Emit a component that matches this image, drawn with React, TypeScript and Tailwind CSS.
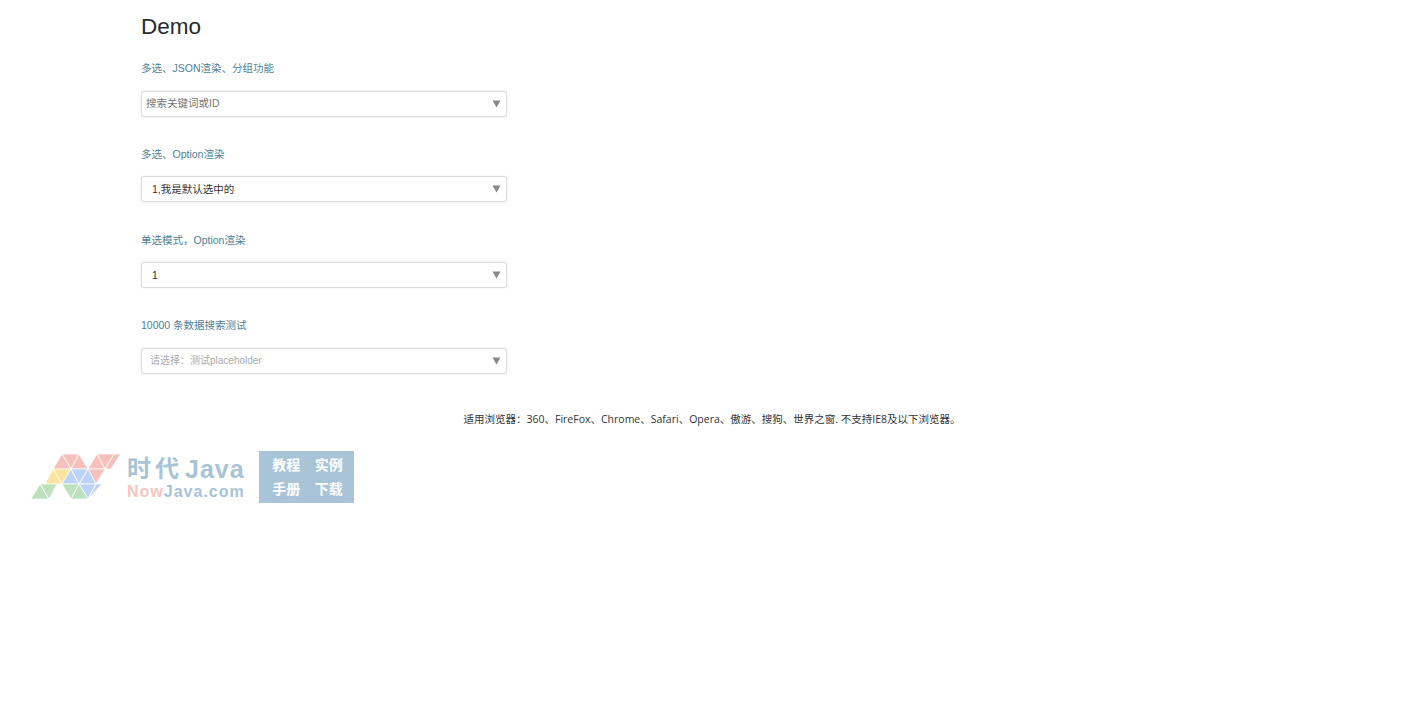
import React from 'react';

const FONT = "font-['Liberation_Sans','Noto_Sans_CJK_SC',sans-serif]";

const Arrow = () => (
    <svg width="9" height="8" viewBox="0 0 9 8" className="shrink-0">
        <path d="M0.5 0.5H8.5L4.5 7.5Z" fill="#888888" />
    </svg>
);

const Field = ({ label, value, className }: { label: string; value: string; className: string }) => (
    <div className="flex flex-col">
        <label className="h-[15px] text-[10.5px] leading-[15px] text-[#4f7f93]">{label}</label>
        <div className="mt-[14.6px] w-[366px] h-[26px] flex items-center justify-between bg-white border border-[#dddddd] rounded-[3px] pr-[5px] shadow-[0_0_2px_rgba(0,0,0,0.15)]">
            <span className={className}>{value}</span>
            <Arrow />
        </div>
    </div>
);

const Logo = () => (
    <svg width="90" height="46" viewBox="31 455 90 46" className="shrink-0">
        <g stroke="#ffffff" strokeWidth="0.7">
            <path d="M53 470L62 455L71 470Z M62 455H79L71 470Z M71 470L79 455L88 470Z" fill="#f6c1bc" />
            <path d="M88 470L97 455L105 470Z M97 455H114L105 470Z M105 470L114 455H120.5L111 470Z" fill="#f6c1bc" />
            <path d="M88 470H105L96 485Z" fill="#f6c1bc" />
            <path d="M45 485L53 470L62 485Z M53 470H71L62 485Z" fill="#fbe3a0" />
            <path d="M62 485L71 470L79 485Z M71 470L79 485L88 470Z M79 485L88 470L96 485Z" fill="#bcd3f6" />
            <path d="M96 485H79L88 500Z M96 485H102L88 500Z" fill="#bcd3f6" />
            <path d="M31 500L40 485L49 500Z M40 485H57L49 500Z" fill="#bde0bd" />
            <path d="M62 485H79L71 500Z M71 500L79 485L88 500Z" fill="#bde0bd" />
        </g>
    </svg>
);

export default function App() {
    return (
        <div className={`${FONT} bg-white min-h-[718px] text-[#333333]`}>
            <div className="pl-[141px] pt-[14px]">
                <h1 className="text-[22.5px] leading-[26px] text-[#2b2b2b]">Demo</h1>
                <div className="mt-[21px] flex flex-col gap-[30.2px]">
                    <Field label="多选、JSON渲染、分组功能" value="搜索关键词或ID" className="pl-[4px] pt-[1px] text-[10.5px] text-[#777777]" />
                    <Field label="多选、Option渲染" value="1,我是默认选中的" className="pl-[10px] pt-[1px] text-[10.5px] text-[#333333]" />
                    <Field label="单选模式，Option渲染" value="1" className="pl-[10px] pt-[1px] text-[10.5px] text-[#333333]" />
                    <Field label="10000 条数据搜索测试" value="请选择：测试placeholder" className="pl-[8px] text-[10px] text-[#aaaaaa]" />
                </div>
            </div>
            <p className="mt-[38.5px] pr-[1px] text-center font-['Open_Sans','Noto_Sans_CJK_SC',sans-serif] text-[10.5px] leading-[15px] text-[#333333]">
                适用浏览器：360、FireFox、Chrome、Safari、Opera、傲游、搜狗、世界之窗. 不支持IE8及以下浏览器。
            </p>
            <div className="mt-[23.5px] ml-[31px] flex items-center">
                <Logo />
                <div className="ml-[6px] mt-[2px] w-[122px] font-bold whitespace-nowrap">
                    <div className="flex items-center text-[24px] leading-[28px] text-[#a9c3d6]">
                        <span className="tracking-[4px]">时代</span>
                        <span className="ml-[2px] text-[25px] tracking-[1px]">Java</span>
                    </div>
                    <div className="text-[16px] leading-[18px] tracking-[1px] text-[#a9c3d6]">
                        <span className="text-[#f6c6c2]">Now</span>Java.com
                    </div>
                </div>
                <div className="ml-[10px] w-[95px] h-[52px] bg-[#a9c4d7] grid grid-cols-2 items-center justify-items-center pl-[6px] pr-[4px] pt-[3px] pb-[1px] text-[14px] font-bold text-white">
                    <span>教程</span>
                    <span>实例</span>
                    <span>手册</span>
                    <span>下载</span>
                </div>
            </div>
        </div>
    );
}
